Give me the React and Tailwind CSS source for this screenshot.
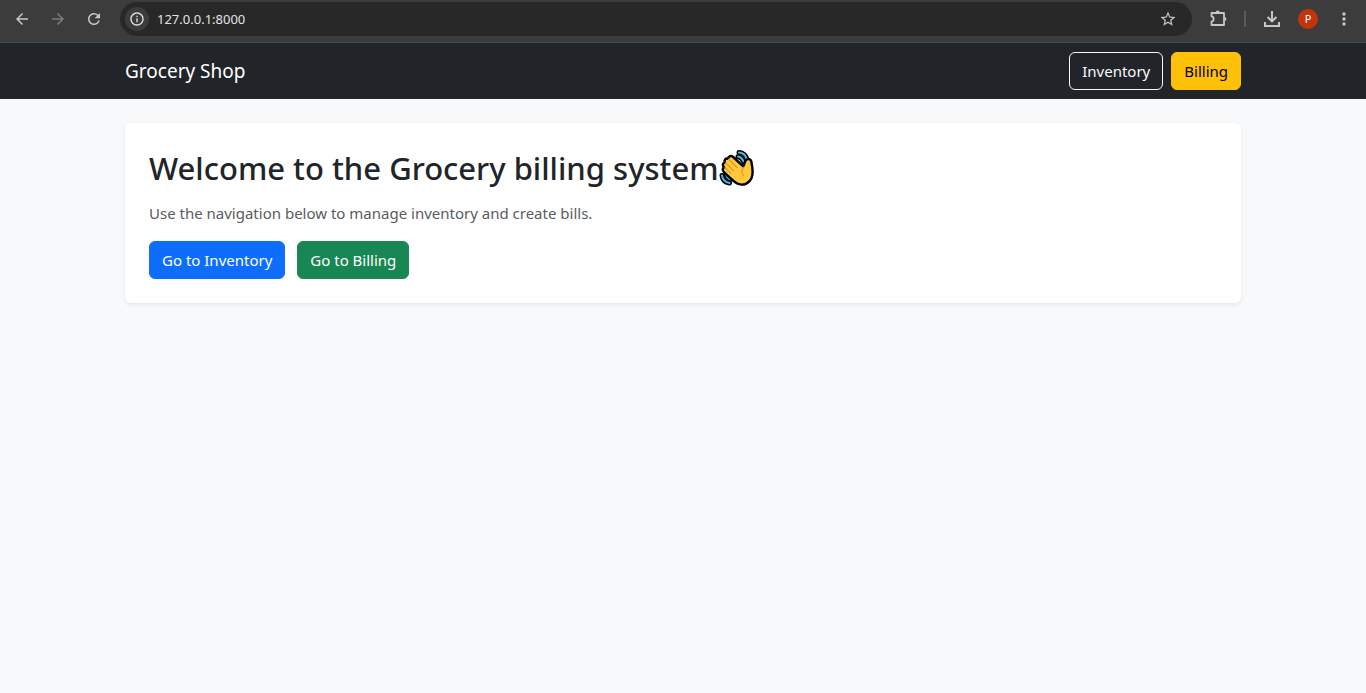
import { MdArrowBack, MdArrowForward, MdRefresh, MdInfoOutline, MdStarBorder, MdMoreVert } from "react-icons/md";

function ExtensionIcon() {
  return (
    <svg width="20" height="20" viewBox="0 0 20 20" fill="none" stroke="currentColor" strokeWidth="1.8" strokeLinejoin="round">
      <path d="M3.5 4H16V16H3.5V12.6C6.3 12.2 6.3 7.8 3.5 7.4Z" />
      <path d="M7.7 3.6A2 2 0 0 1 11.7 3.6ZM16.4 8A2 2 0 0 1 16.4 12Z" fill="currentColor" stroke="none" />
    </svg>
  );
}

function DownloadIcon() {
  return (
    <svg width="18" height="18" viewBox="0 0 18 18" fill="none" stroke="currentColor" strokeWidth="2">
      <path d="M9 1V11.2M4.6 7L9 11.4L13.4 7M2 12V16H16V12" />
    </svg>
  );
}

function WavingHand() {
  return (
    <svg className="shrink-0" width="36" height="38" viewBox="0 0 36 38" fill="none" strokeLinecap="round" strokeLinejoin="round" role="img" aria-label="Waving hand">
      <g stroke="#000" strokeWidth="5">
        <path d="M20 3.5Q26.5 4 28 11M19 7.5Q23 8.5 24.5 12.5M3 26.5Q4 33 10.5 34M7 25.5Q8 29 11.5 30.5" />
      </g>
      <g stroke="#3fc0ea" strokeWidth="1.9">
        <path d="M20 3.5Q26.5 4 28 11M19 7.5Q23 8.5 24.5 12.5M3 26.5Q4 33 10.5 34M7 25.5Q8 29 11.5 30.5" />
      </g>
      <path
        d="M5.2 18.5C2.8 16.5 3.8 13.6 6 13.6C4.6 11.4 6.6 8.8 9 9.8C9.4 7 12.4 6.2 14.2 8L24.2 17.3L26.4 12C27.6 9.2 31.8 9.6 32.3 12.6C32.8 15.2 33.6 18 33.6 23C33.6 31 28.5 35.8 22.5 35.6C18.5 35.4 15.5 33.3 12.5 30.2L5.2 23.4C3 21.4 3.4 19 5.2 18.5Z"
        fill="#ffc83d"
        stroke="#000"
        strokeWidth="2.4"
      />
      <path d="M6.4 13.8L14.5 21.5M9.4 10.2L18 18.3M5.8 18.8L12 24.4M24.8 18.5C22 20.8 22.2 24.4 24.6 26.6" stroke="#e09a20" strokeWidth="1.2" />
    </svg>
  );
}

const iconButton = "flex size-9 items-center justify-center rounded-full";

function BrowserBar() {
  return (
    <div className="flex h-[43px] items-start border-b border-[#46494d] bg-[#3c3c3c] pt-px pr-1 pl-1 text-[#c7c7c7]">
      <div className="flex">
        <button className={iconButton} aria-label="Back"><MdArrowBack size={18} /></button>
        <button className={`${iconButton} text-[#7c7c7c]`} aria-label="Forward"><MdArrowForward size={18} /></button>
        <button className={iconButton} aria-label="Reload"><MdRefresh size={18} /></button>
      </div>
      <div className="mt-px ml-2 flex h-[34px] min-w-0 grow items-center rounded-full bg-[#282828] pr-1.5 pl-[5px]">
        <button className="flex size-6 shrink-0 items-center justify-center rounded-full bg-[#3c3c3c] text-[#e3e3e3]" aria-label="Site information">
          <MdInfoOutline size={16} />
        </button>
        <input
          className="ml-2 min-w-0 grow bg-transparent text-[13px] leading-6 text-[#e3e3e3] outline-none"
          aria-label="Address"
          defaultValue="127.0.0.1:8000"
        />
        <button className={iconButton} aria-label="Bookmark"><MdStarBorder size={18} /></button>
      </div>
      <div className="ml-2 flex items-center">
        <button className={iconButton} aria-label="Extensions"><ExtensionIcon /></button>
        <span className="mx-2 h-4 w-0.5 bg-[#5c5c5c]" />
        <button className={iconButton} aria-label="Downloads"><DownloadIcon /></button>
        <button className={iconButton} aria-label="Profile">
          <span className="flex size-5 items-center justify-center rounded-full bg-[#c1340c] text-[11px] text-white">P</span>
        </button>
        <button className={iconButton} aria-label="Menu"><MdMoreVert size={20} /></button>
      </div>
    </div>
  );
}

const button = "rounded-md border px-3 py-1.5 text-[15px] leading-6";

export default function App() {
  return (
    <div className="min-h-screen bg-[#f8f9fb] font-['Segoe_UI','Noto_Sans',sans-serif] text-[#212529]">
      <BrowserBar />
      <nav className="bg-[#212529] py-2">
        <div className="mx-auto flex max-w-[1140px] items-center justify-between px-3">
          <a href="#" className="py-1 text-[19px] leading-8 text-white">Grocery Shop</a>
          <div className="flex gap-2 py-px">
            <a href="#inventory" className={`${button} border-[#f8f9fa] text-[#f8f9fa]`}>Inventory</a>
            <a href="#billing" className={`${button} border-[#ffc107] bg-[#ffc107] text-black`}>Billing</a>
          </div>
        </div>
      </nav>
      <main className="mx-auto mt-6 max-w-[1140px] px-3">
        <section className="rounded-md bg-white p-6 shadow-[0_2px_4px_rgba(0,0,0,0.075)]">
          <h1 className="mb-3 flex items-center text-[31px] leading-[42px] font-medium">
            Welcome to the Grocery billing system
            <WavingHand />
          </h1>
          <p className="mb-4 text-[15px] leading-6 text-[#595c5f]">Use the navigation below to manage inventory and create bills.</p>
          <div className="flex gap-3">
            <a href="#inventory" className={`${button} border-[#0d6efd] bg-[#0d6efd] text-white`}>Go to Inventory</a>
            <a href="#billing" className={`${button} border-[#198754] bg-[#198754] text-white`}>Go to Billing</a>
          </div>
        </section>
      </main>
    </div>
  );
}
